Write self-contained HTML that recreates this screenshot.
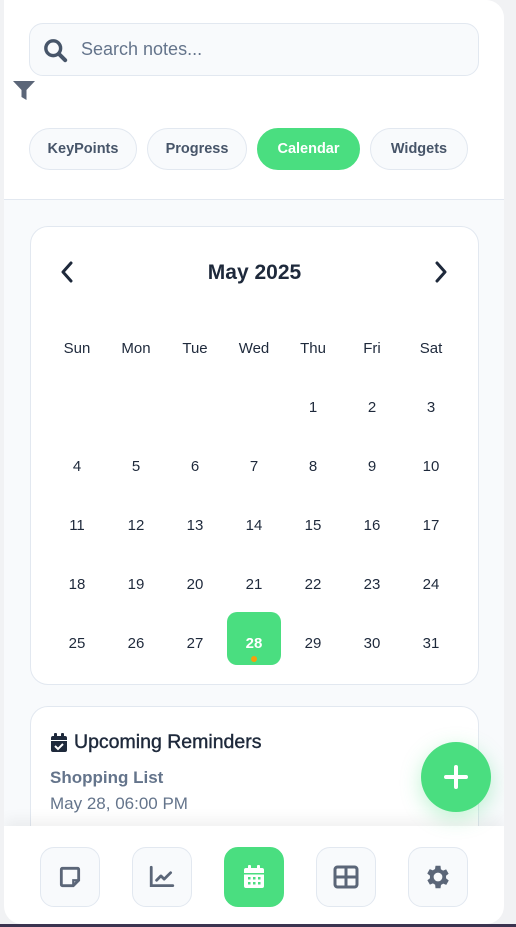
<!DOCTYPE html>
<html><head><meta charset="utf-8"><style>
*{box-sizing:border-box;margin:0;padding:0}
body{width:516px;height:927px;background:#f1f2f4;font-family:"Liberation Sans",sans-serif;position:relative;overflow:hidden}
.bottomline{position:absolute;left:0;right:0;top:924px;height:3px;background:#3b3450}
.app{position:absolute;left:4px;top:0;width:500px;height:924px;background:#f8fafc;border-radius:0 18px 18px 18px;overflow:hidden}
.top{position:absolute;left:0;top:0;width:500px;height:200px;background:#fff;border-bottom:1px solid #e2e8f0}
.search{position:absolute;left:25px;top:23px;width:450px;height:53px;border:1px solid #e2e8f0;border-radius:14px;background:#f8fafc}
.search span{position:absolute;left:51px;top:15px;font-size:18px;color:#64748b}
.pill{position:absolute;top:128px;height:42px;border:1px solid #e2e8f0;border-radius:21px;background:#f8fafc;font-size:14.5px;font-weight:bold;color:#475569;text-align:center;line-height:40px}
.pill.on{background:#4ade80;color:#fff;border-color:#4ade80}
.card{position:absolute;left:26px;width:449px;background:#fff;border:1px solid #e2e8f0;border-radius:18px}
.month{position:absolute;left:0;right:0;top:34px;text-align:center;font-size:21px;font-weight:bold;color:#1e293b}
.c{position:absolute;width:54px;height:54px;margin-left:-27px;margin-top:-27px;text-align:center;line-height:54px;font-size:15px;color:#1e293b}
.nav{position:absolute;left:0;top:826px;width:500px;height:98px;background:#fff;box-shadow:0 -6px 14px rgba(0,0,0,.06)}
.nb{position:absolute;top:21px;width:60px;height:60px;border:1px solid #e2e8f0;border-radius:14px;background:#f8fafc;display:flex;align-items:center;justify-content:center}
.nb.on{background:#4ade80;border-color:#4ade80}
.fab{position:absolute;left:417px;top:742px;width:70px;height:70px;border-radius:50%;background:#4ade80;box-shadow:0 6px 20px rgba(74,222,128,.35);display:flex;align-items:center;justify-content:center}
</style></head><body>
<div class="app">
<div class="top">
 <div class="search">
  <svg style="position:absolute;left:13px;top:14px" width="25" height="25" viewBox="0 0 22 22"><circle cx="9" cy="9" r="6.5" fill="none" stroke="#475569" stroke-width="3"/><path d="M14 14l5.5 5.5" stroke="#475569" stroke-width="3.5" stroke-linecap="round"/></svg>
  <span>Search notes...</span>
 </div>
 <svg style="position:absolute;left:9px;top:81px" width="22" height="19" viewBox="0 0 22 19"><path d="M0 0h22l-8.5 9v10l-5-3V9z" fill="#5b6678"/></svg>
 <div class="pill" style="left:25px;width:108px">KeyPoints</div>
 <div class="pill" style="left:143px;width:100px">Progress</div>
 <div class="pill on" style="left:253px;width:103px">Calendar</div>
 <div class="pill" style="left:366px;width:98px">Widgets</div>
</div>
<div class="card" style="top:226px;height:459px">
 <svg style="position:absolute;left:29px;top:34px" width="14" height="22" viewBox="0 0 14 22"><path d="M11 2L3 11l8 9" fill="none" stroke="#1e293b" stroke-width="3" stroke-linecap="round" stroke-linejoin="round"/></svg>
 <div class="month">May 2025</div>
 <svg style="position:absolute;left:403px;top:34px" width="14" height="22" viewBox="0 0 14 22"><path d="M3 2l8 9-8 9" fill="none" stroke="#1e293b" stroke-width="3" stroke-linecap="round" stroke-linejoin="round"/></svg>
 <div id="g"></div>
</div>
<div class="card" style="top:706px;height:160px">
 <svg style="position:absolute;left:19px;top:26px" width="18" height="20" viewBox="0 0 18 20"><rect x="1" y="3" width="16" height="16" rx="2" fill="#1e293b"/><rect x="4" y="0" width="3" height="5" rx="1" fill="#1e293b"/><rect x="11" y="0" width="3" height="5" rx="1" fill="#1e293b"/><rect x="1" y="7" width="16" height="1" fill="#fff"/><path d="M5 13l3 3 5-5" fill="none" stroke="#fff" stroke-width="2"/></svg>
 <div style="position:absolute;left:43px;top:24px;font-size:19.5px;color:#1e293b;-webkit-text-stroke:0.4px #1e293b">Upcoming Reminders</div>
 <div style="position:absolute;left:19px;top:61px;font-size:17px;font-weight:bold;color:#64748b">Shopping List</div>
 <div style="position:absolute;left:19px;top:87px;font-size:17px;color:#64748b">May 28, 06:00 PM</div>
</div>
<div class="nav">
 <div class="nb" style="left:36px"><svg width="26" height="26" viewBox="0 0 24 24"><path d="M4 5a1 1 0 011-1h14a1 1 0 011 1v10l-5 5H5a1 1 0 01-1-1z" fill="none" stroke="#5b6678" stroke-width="2.6"/><path d="M15 20v-5h5" fill="none" stroke="#5b6678" stroke-width="2"/></svg></div>
 <div class="nb" style="left:128px"><svg width="28" height="26" viewBox="0 0 26 24"><path d="M3 3v17h20" fill="none" stroke="#5b6678" stroke-width="2.6" stroke-linecap="round"/><path d="M8 15l4-4 3 3 6-6" fill="none" stroke="#5b6678" stroke-width="2.6" stroke-linecap="round" stroke-linejoin="round"/></svg></div>
 <div class="nb on" style="left:220px"><svg width="24" height="26" viewBox="0 0 24 26"><rect x="2" y="4" width="20" height="20" rx="2" fill="#fff"/><rect x="6" y="1" width="3" height="5" rx="1" fill="#fff"/><rect x="15" y="1" width="3" height="5" rx="1" fill="#fff"/><rect x="2" y="9" width="20" height="1.5" fill="#4ade80"/><g fill="#4ade80"><rect x="6" y="13" width="2.5" height="2.5"/><rect x="11" y="13" width="2.5" height="2.5"/><rect x="16" y="13" width="2.5" height="2.5"/><rect x="6" y="18" width="2.5" height="2.5"/><rect x="11" y="18" width="2.5" height="2.5"/><rect x="16" y="18" width="2.5" height="2.5"/></g></svg></div>
 <div class="nb" style="left:312px"><svg width="26" height="24" viewBox="0 0 26 24"><rect x="2" y="2" width="22" height="20" rx="2.5" fill="none" stroke="#5b6678" stroke-width="3"/><path d="M13 2v20M2 12h22" stroke="#5b6678" stroke-width="3"/></svg></div>
 <div class="nb" style="left:404px"><svg width="30" height="30" viewBox="0 0 24 24"><path fill="#5b6678" d="M19.4 13a7.5 7.5 0 000-2l2.1-1.6-2-3.5-2.5 1a7.6 7.6 0 00-1.7-1L15 3h-4l-.4 2.7a7.6 7.6 0 00-1.7 1l-2.5-1-2 3.5L6.6 11a7.5 7.5 0 000 2l-2.1 1.6 2 3.5 2.5-1a7.6 7.6 0 001.7 1L11 21h4l.4-2.7a7.6 7.6 0 001.7-1l2.5 1 2-3.5zM13 15.5a3.5 3.5 0 110-7 3.5 3.5 0 010 7z" transform="translate(-1 0)"/></svg></div>
</div>
<div class="fab"><svg width="26" height="26" viewBox="0 0 26 26"><path d="M13 3v20M3 13h20" stroke="#fff" stroke-width="4" stroke-linecap="round"/></svg></div>
</div>
<div class="bottomline"></div>
<script>
var g=document.getElementById('g'),h='';
var xs=[46,105,164,223,282,341,400];
var d=['Sun','Mon','Tue','Wed','Thu','Fri','Sat'];
for(var i=0;i<7;i++)h+='<div class="c" style="left:'+xs[i]+'px;top:122px">'+d[i]+'</div>';
for(var n=1;n<=31;n++){var p=n+3,col=p%7,row=Math.floor(p/7);var t=181+row*59;
if(n==28)h+='<div class="c" style="left:'+xs[col]+'px;top:'+(t-5)+'px;height:53px;line-height:64px;background:#4ade80;color:#fff;font-weight:bold;border-radius:10px">28<div style="position:absolute;left:24px;top:44px;width:6px;height:6px;border-radius:50%;background:#f59e0b"></div></div>';
else h+='<div class="c" style="left:'+xs[col]+'px;top:'+t+'px">'+n+'</div>';}
g.innerHTML=h;
</script>
</body></html>
